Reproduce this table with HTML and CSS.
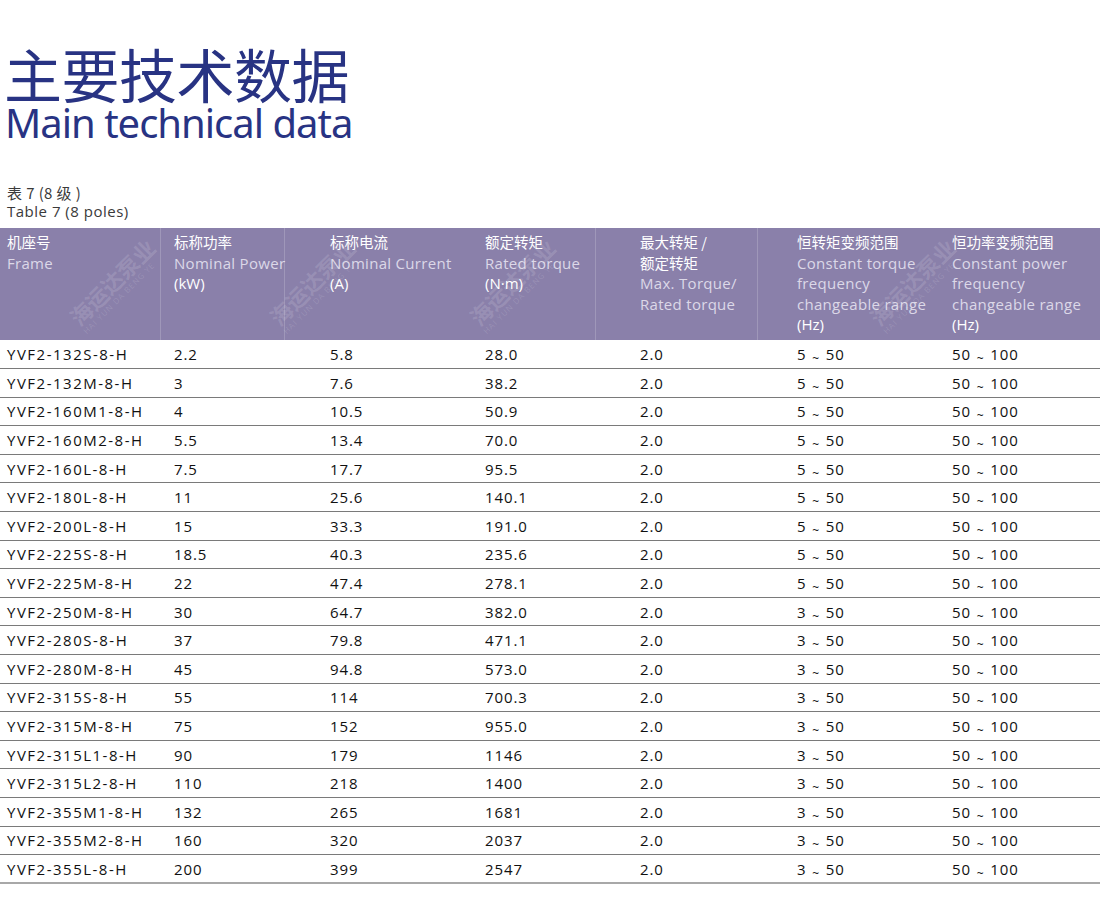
FILE: index.html
```html
<!DOCTYPE html>
<html lang="zh">
<head>
<meta charset="utf-8">
<link rel="stylesheet" href="styles.css">
</head>
<body>
<div class="page">
  <header class="title">
    <div class="title-cn">主要技术数据</div>
    <div class="title-en">Main technical data</div>
  </header>
  <div class="caption">
    <div class="cap-cn">表 7 (8 级 )</div>
    <div class="cap-en">Table 7 (8 poles)</div>
  </div>
  <div class="table-wrap">
    <div class="watermark">
      <span class="wm wm1">海运达泵业<small>HAI YUN DA BENG YE</small></span>
      <span class="wm wm2">海运达泵业<small>HAI YUN DA BENG YE</small></span>
      <span class="wm wm3">海运达泵业<small>HAI YUN DA BENG YE</small></span>
      <span class="wm wm4">海运达泵业<small>HAI YUN DA BENG YE</small></span>
      <i class="vl vl1"></i><i class="vl vl2"></i><i class="vl vl3"></i><i class="vl vl4"></i>
    </div>
    <table class="data">
      <colgroup>
        <col class="c0"><col class="c1"><col class="c2"><col class="c3"><col class="c4"><col class="c5"><col class="c6">
      </colgroup>
      <thead>
        <tr>
          <th><span class="cn">机座号</span><span class="en">Frame</span></th>
          <th><span class="cn">标称功率</span><span class="en">Nominal Power</span><span class="unit">(kW)</span></th>
          <th><span class="cn">标称电流</span><span class="en">Nominal Current</span><span class="unit">(A)</span></th>
          <th><span class="cn">额定转矩</span><span class="en">Rated torque</span><span class="unit">(N·m)</span></th>
          <th><span class="cn">最大转矩 /</span><span class="cn">额定转矩</span><span class="en">Max. Torque/</span><span class="en">Rated torque</span></th>
          <th><span class="cn">恒转矩变频范围</span><span class="en">Constant torque</span><span class="en">frequency</span><span class="en">changeable range</span><span class="unit">(Hz)</span></th>
          <th><span class="cn">恒功率变频范围</span><span class="en">Constant power</span><span class="en">frequency</span><span class="en">changeable range</span><span class="unit">(Hz)</span></th>
        </tr>
      </thead>
      <tbody>
        <tr><td>YVF2-132S-8-H</td><td>2.2</td><td>5.8</td><td>28.0</td><td>2.0</td><td>5 <span class="tl">~</span> 50</td><td>50 <span class="tl">~</span> 100</td></tr>
        <tr><td>YVF2-132M-8-H</td><td>3</td><td>7.6</td><td>38.2</td><td>2.0</td><td>5 <span class="tl">~</span> 50</td><td>50 <span class="tl">~</span> 100</td></tr>
        <tr><td>YVF2-160M1-8-H</td><td>4</td><td>10.5</td><td>50.9</td><td>2.0</td><td>5 <span class="tl">~</span> 50</td><td>50 <span class="tl">~</span> 100</td></tr>
        <tr><td>YVF2-160M2-8-H</td><td>5.5</td><td>13.4</td><td>70.0</td><td>2.0</td><td>5 <span class="tl">~</span> 50</td><td>50 <span class="tl">~</span> 100</td></tr>
        <tr><td>YVF2-160L-8-H</td><td>7.5</td><td>17.7</td><td>95.5</td><td>2.0</td><td>5 <span class="tl">~</span> 50</td><td>50 <span class="tl">~</span> 100</td></tr>
        <tr><td>YVF2-180L-8-H</td><td>11</td><td>25.6</td><td>140.1</td><td>2.0</td><td>5 <span class="tl">~</span> 50</td><td>50 <span class="tl">~</span> 100</td></tr>
        <tr><td>YVF2-200L-8-H</td><td>15</td><td>33.3</td><td>191.0</td><td>2.0</td><td>5 <span class="tl">~</span> 50</td><td>50 <span class="tl">~</span> 100</td></tr>
        <tr><td>YVF2-225S-8-H</td><td>18.5</td><td>40.3</td><td>235.6</td><td>2.0</td><td>5 <span class="tl">~</span> 50</td><td>50 <span class="tl">~</span> 100</td></tr>
        <tr><td>YVF2-225M-8-H</td><td>22</td><td>47.4</td><td>278.1</td><td>2.0</td><td>5 <span class="tl">~</span> 50</td><td>50 <span class="tl">~</span> 100</td></tr>
        <tr><td>YVF2-250M-8-H</td><td>30</td><td>64.7</td><td>382.0</td><td>2.0</td><td>3 <span class="tl">~</span> 50</td><td>50 <span class="tl">~</span> 100</td></tr>
        <tr><td>YVF2-280S-8-H</td><td>37</td><td>79.8</td><td>471.1</td><td>2.0</td><td>3 <span class="tl">~</span> 50</td><td>50 <span class="tl">~</span> 100</td></tr>
        <tr><td>YVF2-280M-8-H</td><td>45</td><td>94.8</td><td>573.0</td><td>2.0</td><td>3 <span class="tl">~</span> 50</td><td>50 <span class="tl">~</span> 100</td></tr>
        <tr><td>YVF2-315S-8-H</td><td>55</td><td>114</td><td>700.3</td><td>2.0</td><td>3 <span class="tl">~</span> 50</td><td>50 <span class="tl">~</span> 100</td></tr>
        <tr><td>YVF2-315M-8-H</td><td>75</td><td>152</td><td>955.0</td><td>2.0</td><td>3 <span class="tl">~</span> 50</td><td>50 <span class="tl">~</span> 100</td></tr>
        <tr><td>YVF2-315L1-8-H</td><td>90</td><td>179</td><td>1146</td><td>2.0</td><td>3 <span class="tl">~</span> 50</td><td>50 <span class="tl">~</span> 100</td></tr>
        <tr><td>YVF2-315L2-8-H</td><td>110</td><td>218</td><td>1400</td><td>2.0</td><td>3 <span class="tl">~</span> 50</td><td>50 <span class="tl">~</span> 100</td></tr>
        <tr><td>YVF2-355M1-8-H</td><td>132</td><td>265</td><td>1681</td><td>2.0</td><td>3 <span class="tl">~</span> 50</td><td>50 <span class="tl">~</span> 100</td></tr>
        <tr><td>YVF2-355M2-8-H</td><td>160</td><td>320</td><td>2037</td><td>2.0</td><td>3 <span class="tl">~</span> 50</td><td>50 <span class="tl">~</span> 100</td></tr>
        <tr class="last"><td>YVF2-355L-8-H</td><td>200</td><td>399</td><td>2547</td><td>2.0</td><td>3 <span class="tl">~</span> 50</td><td>50 <span class="tl">~</span> 100</td></tr>
      </tbody>
    </table>
  </div>
</div>
</body>
</html>
```

FILE: styles.css
```css
html, body {
  margin: 0;
  padding: 0;
  background: #ffffff;
}

.page {
  width: 1100px;
  font-family: "Open Sans", "Noto Sans", "Noto Sans CJK SC", sans-serif;
  color: #1a1a1a;
}

.title {
  padding: 43px 0 0 4px;
  color: #283383;
}

.title-cn {
  font-family: "Noto Sans CJK SC", sans-serif;
  font-size: 58px;
  line-height: 60px;
  letter-spacing: -0.5px;
}

.title-en {
  font-family: "Noto Sans", "Open Sans", sans-serif;
  font-size: 40px;
  line-height: 40px;
  letter-spacing: -1px;
  margin-top: 0;
  padding-left: 1px;
}

.caption {
  padding: 40px 0 0 7px;
  color: #3a3a3a;
  font-size: 15px;
  line-height: 19px;
}

.cap-cn {
  font-family: "Noto Sans CJK SC", sans-serif;
  letter-spacing: 0.4px;
}

.cap-en {
  font-family: "Open Sans", sans-serif;
  letter-spacing: 0.5px;
}

.table-wrap {
  position: relative;
  margin-top: 7px;
}

.data {
  width: 1100px;
  border-collapse: collapse;
  table-layout: fixed;
}

.c0 { width: 167px; }
.c1 { width: 156px; }
.c2 { width: 155px; }
.c3 { width: 155px; }
.c4 { width: 157px; }
.c5 { width: 155px; }
.c6 { width: 155px; }

.data thead th {
  background: #8a80aa;
  height: 112px;
  padding: 4px 0 0 7px;
  vertical-align: top;
  text-align: left;
  font-weight: normal;
  font-size: 15px;
  line-height: 20.6px;
  box-sizing: border-box;
  white-space: nowrap;
}

.data th span {
  display: block;
}

.data th .cn {
  font-family: "Noto Sans CJK SC", sans-serif;
  color: #ffffff;
  font-size: 14.5px;
}

.data th .en {
  color: #dcd8e8;
  letter-spacing: 0.3px;
}

.data th .unit {
  color: #ffffff;
}

.data tbody td {
  height: 28.6px;
  padding: 0 0 0 7px;
  font-size: 15px;
  letter-spacing: 0.9px;
  color: #111111;
  border-bottom: 1px solid #7a7a7a;
  box-sizing: border-box;
  white-space: nowrap;
  vertical-align: middle;
}

.data tbody td:first-child {
  letter-spacing: 1.5px;
}

.data tbody tr.last td {
  border-bottom: 2px solid #a8a8a8;
}

.tl {
  font-size: 12px;
  position: relative;
  top: 3px;
  margin: 0 1px;
}

.watermark {
  position: absolute;
  left: 0;
  top: 0;
  width: 1100px;
  height: 112px;
  overflow: hidden;
  pointer-events: none;
  z-index: 1;
}

.wm {
  position: absolute;
  font-family: "Noto Sans CJK SC", sans-serif;
  font-size: 22px;
  color: rgba(255, 255, 255, 0.14);
  transform: rotate(-45deg);
  white-space: nowrap;
  font-weight: bold;
  line-height: 24px;
}

.wm small {
  display: block;
  font-family: "Open Sans", sans-serif;
  font-size: 8px;
  line-height: 10px;
  font-weight: normal;
  letter-spacing: 1px;
}

.wm1 { left: 60px; top: 40px; }
.wm2 { left: 260px; top: 40px; }
.wm3 { left: 460px; top: 40px; }
.wm4 { left: 860px; top: 40px; }

.vl {
  position: absolute;
  top: 0;
  width: 1px;
  height: 112px;
  background: rgba(255, 255, 255, 0.18);
}

.vl1 { left: 160px; }
.vl2 { left: 284px; }
.vl3 { left: 595px; }
.vl4 { left: 757px; }
```
